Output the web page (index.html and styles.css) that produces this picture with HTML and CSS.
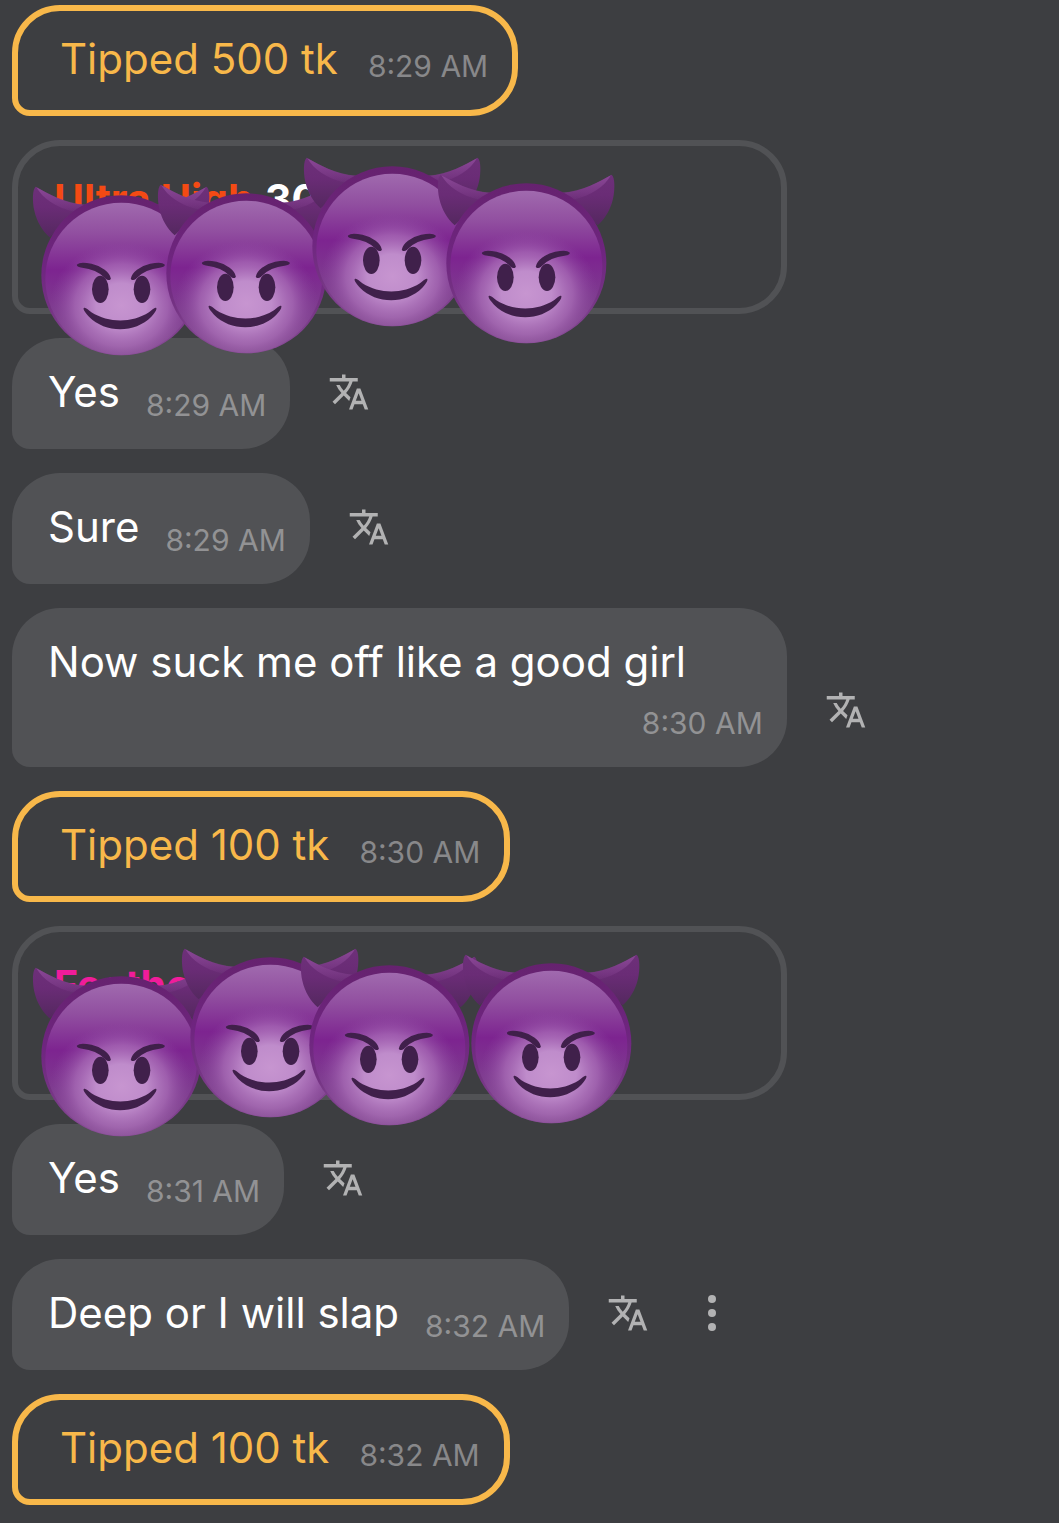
FILE: index.html
```
<!DOCTYPE html>
<html lang="en">
<head>
    <meta charset="UTF-8">
    <meta name="viewport" content="width=device-width, initial-scale=1">
    <title>Chat</title>
    <link rel="stylesheet" href="styles.css">
</head>

<body>
    <svg class="sprite" aria-hidden="true">
        <defs>
            <linearGradient id="rim" x1="0" y1="0" x2="0" y2="1">
                <stop offset="0" stop-color="#66226f"/>
                <stop offset="0.45" stop-color="#6f2580"/>
                <stop offset="1" stop-color="#7b4387"/>
            </linearGradient>
            <linearGradient id="skin" x1="0" y1="0" x2="0" y2="1">
                <stop offset="0" stop-color="#a06aae"/>
                <stop offset="0.2" stop-color="#914fa0"/>
                <stop offset="0.44" stop-color="#7d2490"/>
                <stop offset="0.7" stop-color="#7e3c8f"/>
                <stop offset="1" stop-color="#84508f"/>
            </linearGradient>
            <radialGradient id="glow" gradientUnits="userSpaceOnUse" cx="0" cy="0" r="1" gradientTransform="translate(289 400) scale(215 190)">
                <stop offset="0" stop-color="#c795d0"/>
                <stop offset="0.35" stop-color="#bf8ccb"/>
                <stop offset="0.65" stop-color="#ac70ba" stop-opacity="0.7"/>
                <stop offset="1" stop-color="#8c45a0" stop-opacity="0"/>
            </radialGradient>
            <linearGradient id="horn" x1="0" y1="0" x2="0" y2="1">
                <stop offset="0" stop-color="#6d3079"/>
                <stop offset="0.4" stop-color="#6a2c76"/>
                <stop offset="1" stop-color="#54285f"/>
            </linearGradient>
            <linearGradient id="hornlight" x1="0" y1="0" x2="0" y2="1">
                <stop offset="0" stop-color="#8a4796"/>
                <stop offset="1" stop-color="#8a4796" stop-opacity="0.1"/>
            </linearGradient>
            <clipPath id="face">
                <circle cx="289" cy="310" r="240"/>
            </clipPath>
        </defs>
        <symbol id="devil" viewBox="0 0 570 570">
            <g id="left-horn">
                <path fill="url(#horn)" d="M32 44C22 52 22 88 28 116C36 150 52 176 74 196L180 98C120 94 70 66 32 44Z"/>
                <path fill="url(#hornlight)" d="M34 46C54 80 90 106 150 120L180 98C120 94 70 66 34 46Z"/>
            </g>
            <use href="#left-horn" transform="translate(577 0) scale(-1 1)"/>
            <circle cx="289" cy="310" r="240" fill="url(#rim)"/>
            <ellipse cx="289" cy="320" rx="228" ry="228" fill="url(#skin)"/>
            <ellipse cx="289" cy="400" rx="215" ry="190" fill="url(#glow)" clip-path="url(#face)"/>
            <g fill="#40204b">
                <g stroke="#40204b" stroke-width="5" stroke-linejoin="round">
                    <path d="M158 279C163 274 180 274 199 278C230 285 252 303 255 320C251 324 248 322 243 318C222 293 195 287 168 284C161 283 158 282 158 279Z"/>
                    <path d="M417 279C412 274 395 274 376 278C345 285 323 303 320 320C324 324 327 322 332 318C353 293 380 287 407 284C414 283 417 282 417 279Z"/>
                </g>
                <ellipse cx="226" cy="352" rx="25" ry="41"/>
                <ellipse cx="351" cy="352" rx="25" ry="41"/>
                <path d="M176 408C181 404 190 414 199 421C252 454 320 454 372 421C381 414 390 404 394 408C396 414 388 424 379 434C330 484 241 484 192 434C183 424 174 414 176 408Z"/>
            </g>
        </symbol>
        <symbol id="translate" viewBox="0 0 24 24">
            <path d="M12.87 15.07l-2.54-2.51.03-.03c1.74-1.94 2.98-4.17 3.71-6.53H17V4h-7V2H8v2H1v1.99h11.17C11.5 7.92 10.44 9.75 9 11.35 8.07 10.32 7.3 9.19 6.69 8h-2c.73 1.63 1.73 3.17 2.98 4.56l-5.09 5.02L4 19l5-5 3.11 3.11.76-2.04zM18.5 10h-2L12 22h2l1.12-3h4.75L21 22h2l-4.5-12zm-2.62 7l1.62-4.33L19.12 17h-3.24z"/>
        </symbol>
    </svg>

    <main class="chat">
        <div class="row">
            <div class="bubble tip">
                <span class="text">Tipped 500 tk</span>
                <time>8:29 AM</time>
            </div>
        </div>

        <div class="row">
            <div class="bubble notice">
                <span class="text"><b class="level-ultra">Ultra High</b> <b>30</b></span>
                <svg class="emoji a1"><use href="#devil"/></svg>
                <svg class="emoji a2"><use href="#devil"/></svg>
                <svg class="emoji a3"><use href="#devil"/></svg>
                <svg class="emoji a4"><use href="#devil"/></svg>
            </div>
        </div>

        <div class="row">
            <div class="bubble">
                <span class="text">Yes</span>
                <time>8:29 AM</time>
            </div>
            <button class="action" aria-label="Translate"><svg><use href="#translate"/></svg></button>
        </div>

        <div class="row">
            <div class="bubble">
                <span class="text">Sure</span>
                <time>8:29 AM</time>
            </div>
            <button class="action" aria-label="Translate"><svg><use href="#translate"/></svg></button>
        </div>

        <div class="row">
            <div class="bubble">
                <span class="text">Now suck me off like a good girl</span>
                <time>8:30 AM</time>
            </div>
            <button class="action" aria-label="Translate"><svg><use href="#translate"/></svg></button>
        </div>

        <div class="row">
            <div class="bubble tip">
                <span class="text">Tipped 100 tk</span>
                <time>8:30 AM</time>
            </div>
        </div>

        <div class="row">
            <div class="bubble notice">
                <span class="text"><b class="level-feather">Feather</b></span>
                <svg class="emoji b1"><use href="#devil"/></svg>
                <svg class="emoji b2"><use href="#devil"/></svg>
                <svg class="emoji b3"><use href="#devil"/></svg>
                <svg class="emoji b4"><use href="#devil"/></svg>
            </div>
        </div>

        <div class="row">
            <div class="bubble">
                <span class="text">Yes</span>
                <time>8:31 AM</time>
            </div>
            <button class="action" aria-label="Translate"><svg><use href="#translate"/></svg></button>
        </div>

        <div class="row">
            <div class="bubble">
                <span class="text">Deep or I will slap</span>
                <time>8:32 AM</time>
            </div>
            <button class="action" aria-label="Translate"><svg><use href="#translate"/></svg></button>
            <button class="action" aria-label="More">
                <svg viewBox="0 0 42 42">
                    <circle cx="21" cy="7" r="4"/>
                    <circle cx="21" cy="21" r="4"/>
                    <circle cx="21" cy="35" r="4"/>
                </svg>
            </button>
        </div>

        <div class="row">
            <div class="bubble tip">
                <span class="text">Tipped 100 tk</span>
                <time>8:32 AM</time>
            </div>
        </div>
    </main>
</body>
</html>
```
FILE: styles.css
```
* {
    box-sizing: border-box;
}
body {
    margin: 0;
    background: #3d3e41;
    color: #fff;
    font-family: Inter, "Liberation Sans", sans-serif;
    font-size: 42px;
    line-height: 63px;
}
.sprite {
    position: absolute;
    width: 0;
    height: 0;
}
.chat {
    display: flex;
    flex-direction: column;
    gap: 24px;
    padding: 5px 0 18px 12px;
}
.row {
    display: flex;
    align-items: flex-end;
}
.bubble {
    display: flex;
    flex-wrap: wrap;
    align-items: flex-end;
    gap: 12px 26px;
    max-width: 74%;
    padding: 22px 24px 26px 36px;
    background: #515255;
    border-radius: 48px 48px 48px 18px;
}
.bubble time {
    margin-left: auto;
    color: #929294;
    font-size: 30px;
    line-height: 36px;
}
.tip {
    column-gap: 30px;
    padding: 16px 24px 20px 42px;
    background: none;
    border: 6px solid #f8b84a;
    color: #f8b84a;
}
.tip time {
    margin-bottom: 6px;
    color: #88888a;
}

/* tip menu notices, covered by emoji */
.notice {
    position: relative;
    align-items: flex-start;
    width: 74%;
    min-height: 174px;
    background: none;
    border: 6px solid #515255;
    font-size: 41px;
}
.level-ultra {
    color: #f44a14;
}
.level-feather {
    color: #f01c9a;
}
.emoji {
    position: absolute;
    z-index: 1;
    width: 190px;
    height: 190px;
}
.a1 { left: 7px; top: 26px; }
.a2 { left: 132px; top: 24px; }
.a3 { left: 278px; top: -3px; }
.a4 { left: 412px; top: 14px; }
.b1 { left: 7px; top: 21px; }
.b2 { left: 156px; top: 2px; }
.b3 { left: 275px; top: 10px; }
.b4 { left: 437px; top: 8px; }

.action {
    margin: 0 0 36px 38px;
    padding: 0;
    background: none;
    border: 0;
    cursor: pointer;
}
.action + .action {
    margin-left: 42px;
}
.action svg {
    display: block;
    width: 42px;
    height: 42px;
    fill: #b2b2b3;
}
```
